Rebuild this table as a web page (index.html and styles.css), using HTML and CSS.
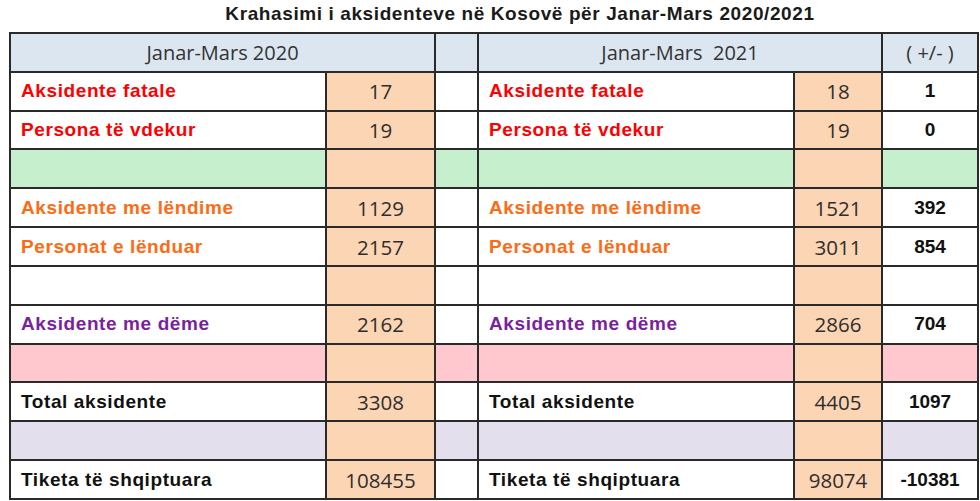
FILE: index.html
```html
<!DOCTYPE html>
<html lang="sq">
<head>
<meta charset="utf-8">
<title>Krahasimi i aksidenteve</title>
<link rel="stylesheet" href="styles.css">
</head>
<body>
<div class="page">
  <h1 class="title">Krahasimi i aksidenteve në Kosovë për Janar-Mars 2020/2021</h1>
  <table class="cmp">
    <colgroup>
      <col class="c-label"><col class="c-num"><col class="c-sep"><col class="c-label"><col class="c-num2"><col class="c-diff">
    </colgroup>
    <tr class="head">
      <th colspan="2">Janar-Mars 2020</th>
      <th></th>
      <th colspan="2">Janar-Mars&nbsp; 2021</th>
      <th>( +/- )</th>
    </tr>
    <tr class="red">
      <td class="lbl">Aksidente fatale</td><td class="num">17</td><td></td>
      <td class="lbl">Aksidente fatale</td><td class="num">18</td><td class="diff">1</td>
    </tr>
    <tr class="red">
      <td class="lbl">Persona të vdekur</td><td class="num">19</td><td></td>
      <td class="lbl">Persona të vdekur</td><td class="num">19</td><td class="diff">0</td>
    </tr>
    <tr class="green">
      <td></td><td class="num"></td><td></td><td></td><td class="num"></td><td></td>
    </tr>
    <tr class="orange">
      <td class="lbl">Aksidente me lëndime</td><td class="num">1129</td><td></td>
      <td class="lbl">Aksidente me lëndime</td><td class="num">1521</td><td class="diff">392</td>
    </tr>
    <tr class="orange">
      <td class="lbl">Personat e lënduar</td><td class="num">2157</td><td></td>
      <td class="lbl">Personat e lënduar</td><td class="num">3011</td><td class="diff">854</td>
    </tr>
    <tr>
      <td></td><td class="num"></td><td></td><td></td><td class="num"></td><td></td>
    </tr>
    <tr class="purple">
      <td class="lbl">Aksidente me dëme</td><td class="num">2162</td><td></td>
      <td class="lbl">Aksidente me dëme</td><td class="num">2866</td><td class="diff">704</td>
    </tr>
    <tr class="pink">
      <td></td><td class="num"></td><td></td><td></td><td class="num"></td><td></td>
    </tr>
    <tr>
      <td class="lbl">Total aksidente</td><td class="num">3308</td><td></td>
      <td class="lbl">Total aksidente</td><td class="num">4405</td><td class="diff">1097</td>
    </tr>
    <tr class="lavender">
      <td></td><td class="num"></td><td></td><td></td><td class="num"></td><td></td>
    </tr>
    <tr>
      <td class="lbl">Tiketa të shqiptuara</td><td class="num">108455</td><td></td>
      <td class="lbl">Tiketa të shqiptuara</td><td class="num">98074</td><td class="diff">-10381</td>
    </tr>
  </table>
</div>
</body>
</html>
```

FILE: styles.css
```css
html, body {
  margin: 0;
  padding: 0;
  background: #ffffff;
}

.page {
  padding: 0 3px 0 9px;
  font-family: "Liberation Sans", Arial, sans-serif;
}

.title {
  margin: 0;
  height: 32px;
  padding-left: 54px;
  width: 914px;
  text-align: center;
  font-size: 19px;
  line-height: 28px;
  letter-spacing: 0.6px;
  font-weight: bold;
  color: #1a1a1a;
}

.cmp {
  border-collapse: collapse;
  table-layout: fixed;
  width: 968px;
}

.c-label { width: 316px; }
.c-num { width: 109px; }
.c-sep { width: 43px; }
.c-num2 { width: 88px; }
.c-diff { width: 96px; }

.cmp th,
.cmp td {
  border: 2px solid #2a2a2a;
  height: 36.83px;
  padding: 0;
  vertical-align: middle;
}

.head th {
  background: #dce6f1;
  font-family: "Open Sans", "Noto Sans", sans-serif;
  font-weight: normal;
  font-size: 20px;
  color: #333333;
  text-align: center;
}

.cmp td.lbl {
  padding-left: 10px;
  font-size: 19px;
  font-weight: bold;
  letter-spacing: 0.6px;
  color: #111111;
  white-space: nowrap;
}

.cmp td.num {
  background: #fcd5b4;
  text-align: center;
  font-family: "Open Sans", "Noto Sans", sans-serif;
  font-size: 20.5px;
  color: #2e2e2e;
}

.diff {
  text-align: center;
  font-size: 19px;
  font-weight: bold;
  color: #111111;
}

.cmp .red td.lbl { color: #ff0000; }
.cmp .orange td.lbl { color: #ff6a14; }
.cmp .purple td.lbl { color: #7b1fa0; }

.green td { background: #c6efce; }
.pink td { background: #ffc7ce; }
.lavender td { background: #e4dfec; }
```
